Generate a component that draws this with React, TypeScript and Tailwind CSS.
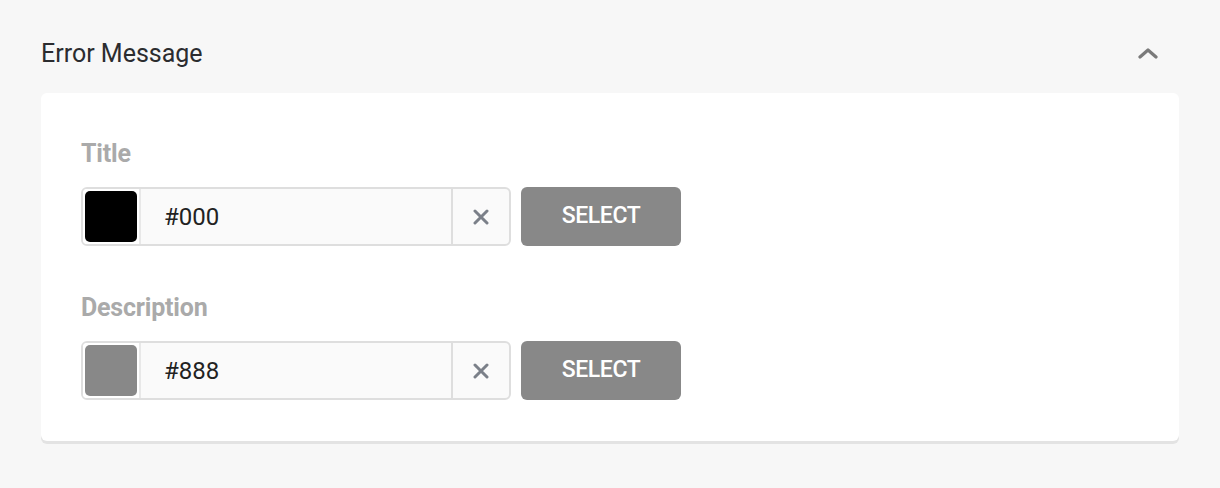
type ColorRow = { label: string; value: string; swatch: string };

const ROWS: ColorRow[] = [
  { label: 'Title', value: '#000', swatch: 'bg-[#000000]' },
  { label: 'Description', value: '#888', swatch: 'bg-[#888888]' },
];

export default function App() {
  return (
    <div className="min-h-screen bg-[#f7f7f7] px-[41px] pt-[36px] font-['Roboto',sans-serif]">
      <div className="flex h-[34px] items-center justify-between">
        <h2 className="text-[25px] leading-none text-[#2b2c2f]">Error Message</h2>
        <button className="mr-[19px] flex h-6 w-6 items-center justify-center text-[#7a7a7a]">
          <svg width="20" height="12" viewBox="0 0 20 12" fill="none">
            <path d="M2 10 L10 3 L18 10" stroke="currentColor" strokeWidth="3.2" strokeLinecap="round" strokeLinejoin="round" />
          </svg>
        </button>
      </div>

      <section className="mt-[23px] rounded-[6px] bg-white px-[40px] pt-[48px] pb-[41px] shadow-[0_3px_0_#e3e3e3]">
        <div className="flex flex-col gap-[49px]">
          {ROWS.map((r) => (
            <ColorField key={r.label} row={r} />
          ))}
        </div>
      </section>
    </div>
  );
}

function ColorField({ row }: { row: ColorRow }) {
  return (
    <div>
      <label className="block text-[25px] font-bold leading-none tracking-[-0.2px] text-[#aaaaaa]">{row.label}</label>
      <div className="mt-[21px] flex items-stretch gap-[10px]">
        <div className="flex h-[59px] w-[430px] overflow-hidden rounded-[6px] border-2 border-[#dedede] bg-[#fafafa]">
          <div className="flex w-[58px] shrink-0 items-center justify-center border-r-2 border-[#e8e8e8] bg-white p-[2px]">
            <div className={'h-full w-full rounded-[5px] ' + row.swatch} />
          </div>
          <div className="flex flex-1 items-center pl-[23px] text-[24px] text-[#222]">{row.value}</div>
          <button className="flex w-[58px] shrink-0 items-center justify-center border-l-2 border-[#dedede] text-[#7b8089]">
            <svg width="16" height="16" viewBox="0 0 16 16" fill="none">
              <path d="M2 2 L14 14 M14 2 L2 14" stroke="currentColor" strokeWidth="3" strokeLinecap="round" />
            </svg>
          </button>
        </div>
        <button className="h-[59px] w-[160px] rounded-[6px] bg-[#888888] text-[23px] font-medium tracking-[-0.4px] text-white">
          SELECT
        </button>
      </div>
    </div>
  );
}
